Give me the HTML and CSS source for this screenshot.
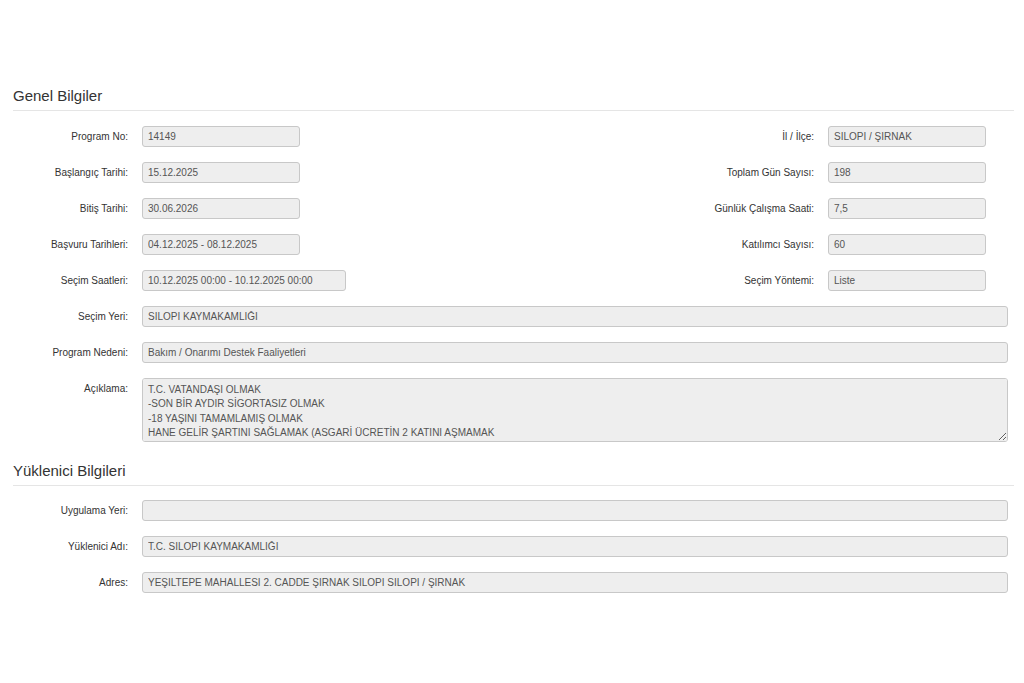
FILE: index.html
```html
<!DOCTYPE html>
<html lang="tr">
<head>
    <meta charset="UTF-8">
    <meta name="viewport" content="width=device-width, initial-scale=1.0">
    <title>Program Bilgileri</title>
    <link rel="stylesheet" href="styles.css">
</head>
<body>
    <div class="page">
        <h3 class="legend">Genel Bilgiler</h3>
        <div class="form">
            <div class="row split">
                <div class="field">
                    <label class="lbl">Program No:</label>
                    <input class="ctl short" type="text" value="14149" readonly>
                </div>
                <div class="field">
                    <label class="lbl">İl / İlçe:</label>
                    <input class="ctl short" type="text" value="SİLOPİ / ŞIRNAK" readonly>
                </div>
            </div>
            <div class="row split">
                <div class="field">
                    <label class="lbl">Başlangıç Tarihi:</label>
                    <input class="ctl short" type="text" value="15.12.2025" readonly>
                </div>
                <div class="field">
                    <label class="lbl">Toplam Gün Sayısı:</label>
                    <input class="ctl short" type="text" value="198" readonly>
                </div>
            </div>
            <div class="row split">
                <div class="field">
                    <label class="lbl">Bitiş Tarihi:</label>
                    <input class="ctl short" type="text" value="30.06.2026" readonly>
                </div>
                <div class="field">
                    <label class="lbl">Günlük Çalışma Saati:</label>
                    <input class="ctl short" type="text" value="7,5" readonly>
                </div>
            </div>
            <div class="row split">
                <div class="field">
                    <label class="lbl">Başvuru Tarihleri:</label>
                    <input class="ctl short" type="text" value="04.12.2025 - 08.12.2025" readonly>
                </div>
                <div class="field">
                    <label class="lbl">Katılımcı Sayısı:</label>
                    <input class="ctl short" type="text" value="60" readonly>
                </div>
            </div>
            <div class="row split">
                <div class="field">
                    <label class="lbl">Seçim Saatleri:</label>
                    <input class="ctl medium" type="text" value="10.12.2025 00:00 - 10.12.2025 00:00" readonly>
                </div>
                <div class="field">
                    <label class="lbl">Seçim Yöntemi:</label>
                    <input class="ctl short" type="text" value="Liste" readonly>
                </div>
            </div>
            <div class="row full">
                <label class="lbl">Seçim Yeri:</label>
                <input class="ctl" type="text" value="SİLOPİ KAYMAKAMLIĞI" readonly>
            </div>
            <div class="row full">
                <label class="lbl">Program Nedeni:</label>
                <input class="ctl" type="text" value="Bakım / Onarımı Destek Faaliyetleri" readonly>
            </div>
            <div class="row full top">
                <label class="lbl">Açıklama:</label>
                <textarea class="ctl area" readonly>T.C. VATANDAŞI OLMAK
-SON BİR AYDIR SİGORTASIZ OLMAK
-18 YAŞINI TAMAMLAMIŞ OLMAK
HANE GELİR ŞARTINI SAĞLAMAK (ASGARİ ÜCRETİN 2 KATINI AŞMAMAK</textarea>
            </div>
        </div>

        <h3 class="legend second">Yüklenici Bilgileri</h3>
        <div class="form">
            <div class="row full">
                <label class="lbl">Uygulama Yeri:</label>
                <input class="ctl" type="text" value="" readonly>
            </div>
            <div class="row full">
                <label class="lbl">Yüklenici Adı:</label>
                <input class="ctl" type="text" value="T.C. SİLOPİ KAYMAKAMLIĞI" readonly>
            </div>
            <div class="row full">
                <label class="lbl">Adres:</label>
                <input class="ctl" type="text" value="YEŞİLTEPE MAHALLESİ 2. CADDE ŞIRNAK SİLOPİ SİLOPİ / ŞIRNAK" readonly>
            </div>
        </div>
    </div>
</body>
</html>
```

FILE: styles.css
```css
* {
    box-sizing: border-box;
    margin: 0;
    padding: 0;
}

body {
    font-family: 'Liberation Sans', Arial, sans-serif;
    font-size: 10px;
    color: #333;
    background: #fff;
}

.page {
    padding: 86px 10px 0 13px;
}

.legend {
    font-size: 15px;
    font-weight: normal;
    line-height: 20px;
    color: #333;
    padding-bottom: 4px;
    border-bottom: 1px solid #e5e5e5;
    margin-bottom: 15px;
}

.legend.second {
    margin-top: 19px;
    margin-bottom: 14px;
}

.form {
    display: flex;
    flex-direction: column;
    gap: 15px;
}

.row {
    display: flex;
    align-items: center;
}

.row.split {
    justify-content: space-between;
    padding-right: 28px;
}

.row.full {
    padding-right: 6px;
}

.row.top {
    align-items: flex-start;
}

.field {
    display: flex;
    align-items: center;
}

.lbl {
    line-height: 21px;
    text-align: right;
    color: #333;
    margin-right: 14px;
}

.row.full .lbl,
.field:first-child .lbl {
    width: 115px;
    flex-shrink: 0;
}

.ctl {
    height: 21px;
    padding: 0 5px;
    border: 1px solid #c8c8c8;
    border-radius: 3px;
    background: #eee;
    color: #555;
    font-family: inherit;
    font-size: 10px;
    outline: none;
}

.row.full .ctl {
    flex: 1;
}

.ctl.short {
    width: 158px;
}

.ctl.medium {
    width: 204px;
}

.ctl.area {
    height: 64px;
    padding: 4px 5px;
    line-height: 14.3px;
    resize: vertical;
}
```
